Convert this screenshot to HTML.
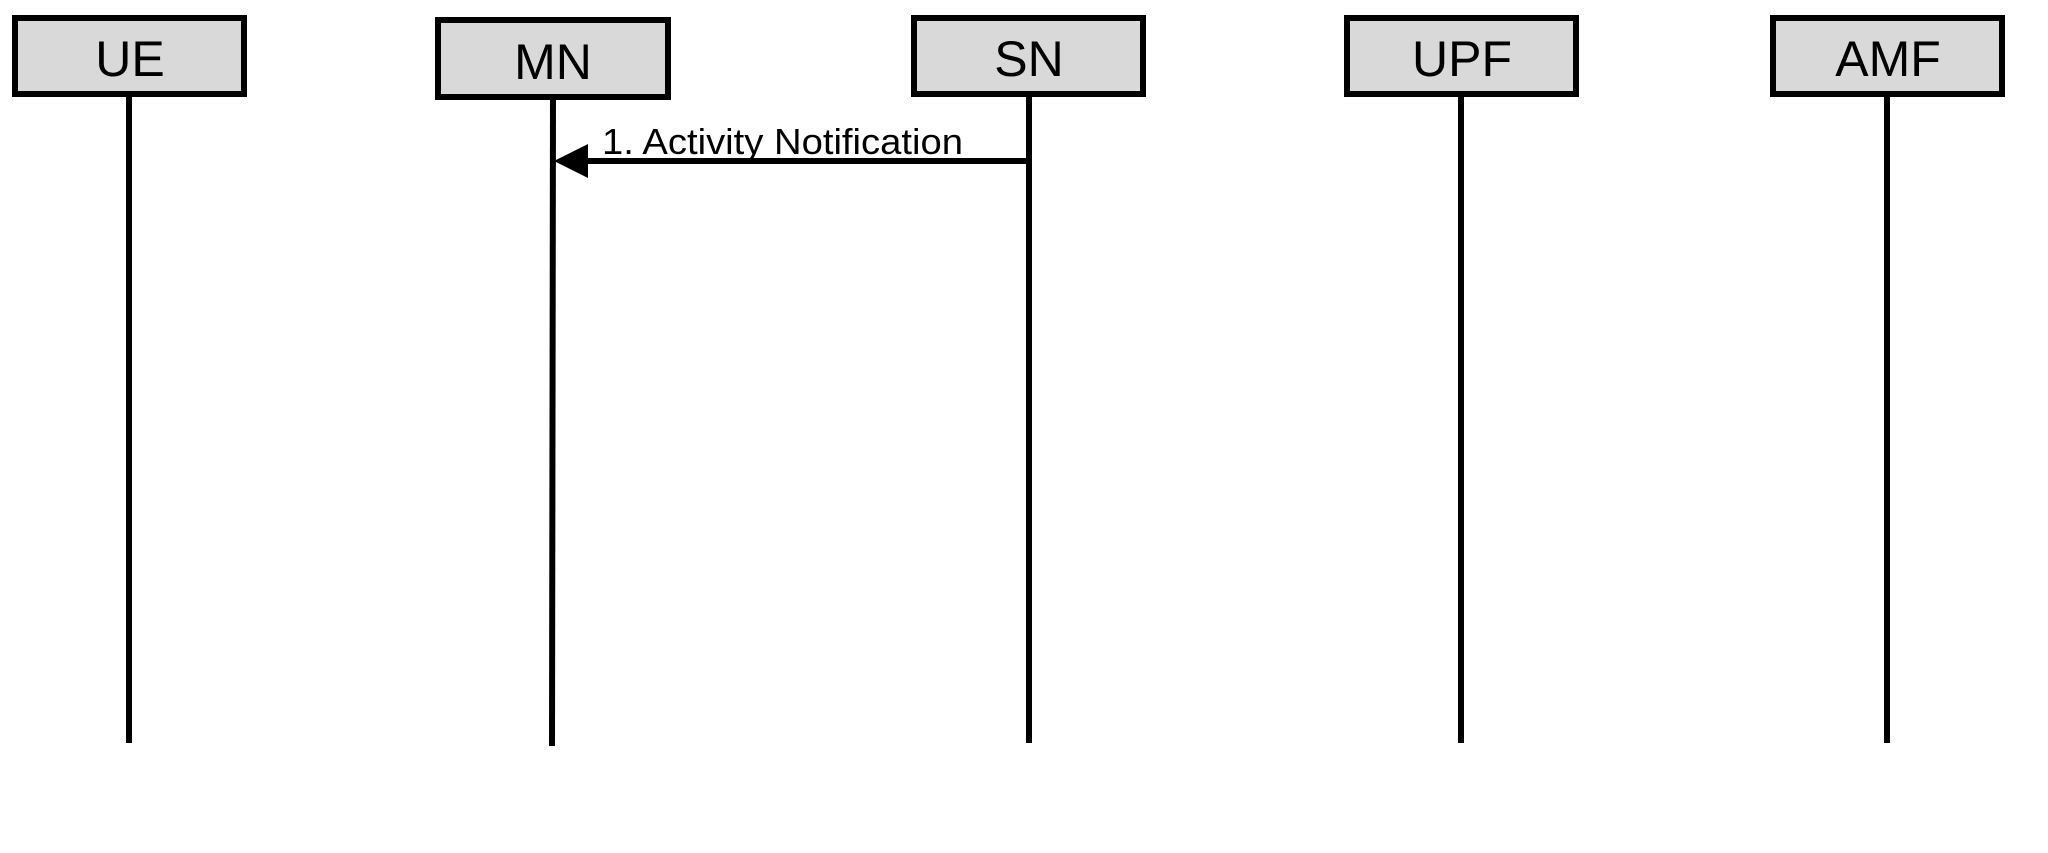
<!DOCTYPE html>
<html><head><meta charset="utf-8"><style>
html,body{margin:0;padding:0;background:#fff;width:2048px;height:853px;overflow:hidden}
svg text{font-family:"Liberation Sans",sans-serif;fill:#000}
</style></head><body>
<svg width="2048" height="853" xmlns="http://www.w3.org/2000/svg">
<g stroke="#000" stroke-width="6" fill="#d9d9d9">
<rect x="15" y="18" width="229" height="76"/>
<rect x="438" y="20" width="230" height="77"/>
<rect x="914" y="18" width="229" height="76"/>
<rect x="1347" y="18" width="229" height="76"/>
<rect x="1773" y="18" width="229" height="76"/>
</g>
<g stroke="#000" stroke-width="6">
<line x1="129" y1="94" x2="129" y2="743"/>
<line x1="553" y1="97" x2="552" y2="746"/>
<line x1="1029" y1="94" x2="1029" y2="743"/>
<line x1="1461" y1="94" x2="1461" y2="743"/>
<line x1="1887" y1="94" x2="1887" y2="743"/>
<line x1="1029" y1="161" x2="585" y2="161"/>
</g>
<polygon points="554,161 588,144 588,178" fill="#000"/>
<g font-size="50" text-anchor="middle">
<text x="130" y="76">UE</text>
<text x="553" y="79">MN</text>
<text x="1029" y="76">SN</text>
<text x="1462" y="76">UPF</text>
<text x="1888" y="76">AMF</text>
</g>
<text x="602" y="154" font-size="36" textLength="361" lengthAdjust="spacingAndGlyphs">1. Activity Notification</text>
</svg>
</body></html>
